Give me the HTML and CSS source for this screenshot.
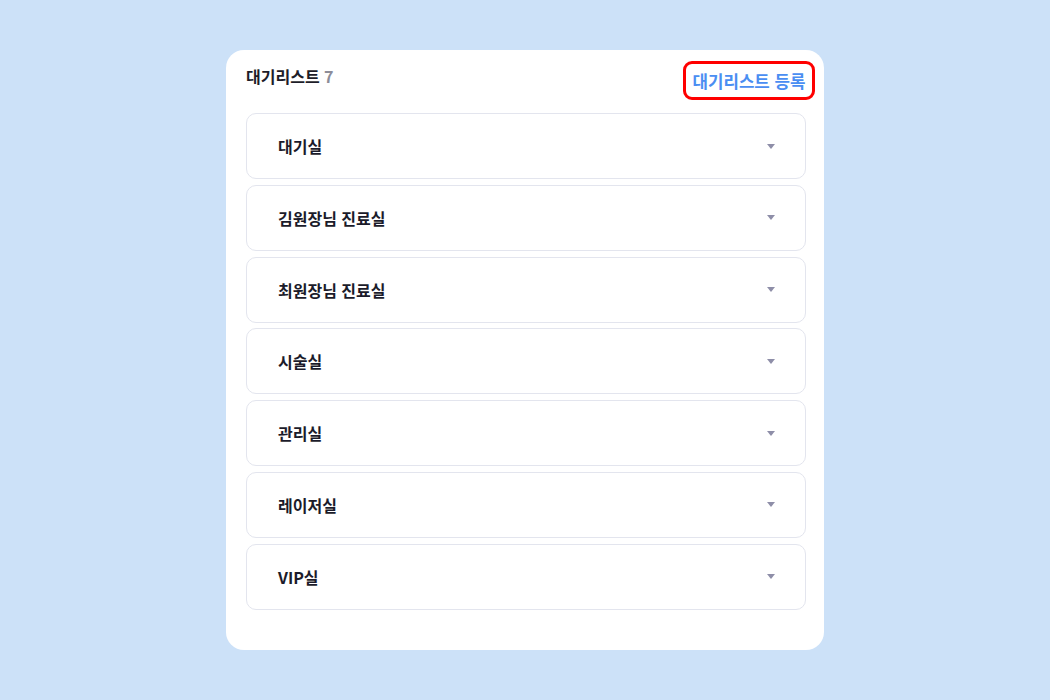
FILE: index.html
```html
<!DOCTYPE html>
<html lang="ko">
<head>
<meta charset="utf-8">
<link rel="stylesheet" href="styles.css">
</head>
<body>
<div class="stage">
  <section class="card">
    <header class="card-head">
      <h2 class="title">대기리스트 <span class="count">7</span></h2>
      <button class="add-btn">대기리스트 등록</button>
    </header>
    <ul class="rooms">
      <li class="room"><span class="room-name">대기실</span><span class="caret"></span></li>
      <li class="room"><span class="room-name">김원장님 진료실</span><span class="caret"></span></li>
      <li class="room"><span class="room-name">최원장님 진료실</span><span class="caret"></span></li>
      <li class="room"><span class="room-name">시술실</span><span class="caret"></span></li>
      <li class="room"><span class="room-name">관리실</span><span class="caret"></span></li>
      <li class="room"><span class="room-name">레이저실</span><span class="caret"></span></li>
      <li class="room"><span class="room-name">VIP실</span><span class="caret"></span></li>
    </ul>
  </section>
</div>
</body>
</html>
```

FILE: styles.css
```css
* { box-sizing: border-box; }
html, body {
  margin: 0;
  padding: 0;
  width: 1050px;
  height: 700px;
  background: #cce1f8;
  font-family: "Noto Sans CJK KR", "Noto Sans", sans-serif;
}
.stage {
  display: flex;
  justify-content: center;
  padding-top: 50px;
}
.card {
  width: 598px;
  height: 600px;
  background: #ffffff;
  border-radius: 18px;
  padding: 11px 18px 0 20px;
}
.card-head {
  display: flex;
  justify-content: space-between;
  align-items: flex-start;
  height: 39px;
  margin-bottom: 13px;
}
.title {
  margin: 5px 0 0 0;
  font-size: 16px;
  line-height: 20px;
  font-weight: 700;
  color: #1d1d29;
}
.count {
  color: #8d8d99;
  font-weight: 700;
}
.add-btn {
  margin: 0 -9px 0 0;
  height: 39px;
  width: 132px;
  padding: 0;
  border: 3px solid #ff0000;
  border-radius: 9px;
  background: #ffffff;
  color: #4a8ef2;
  font-family: inherit;
  font-size: 16.8px;
  font-weight: 700;
  line-height: 20px;
}
.rooms {
  list-style: none;
  margin: 0;
  padding: 0;
  display: flex;
  flex-direction: column;
  gap: 5.8px;
}
.room {
  height: 66px;
  border: 1px solid #e3e5ee;
  border-radius: 10px;
  display: flex;
  align-items: center;
  justify-content: space-between;
  padding: 0 30px 0 31px;
}
.room-name {
  font-size: 16px;
  font-weight: 700;
  color: #1b1b2a;
}
.caret {
  width: 0;
  height: 0;
  border-left: 4.5px solid transparent;
  border-right: 4.5px solid transparent;
  border-top: 5px solid #8e8ea8;
}
```
